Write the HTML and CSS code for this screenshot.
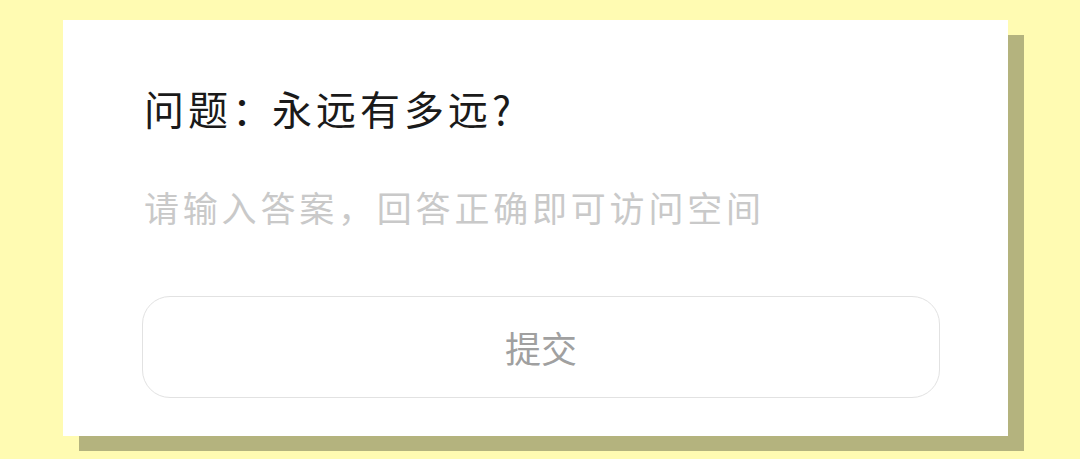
FILE: index.html
```html
<!DOCTYPE html>
<html lang="zh-CN">
<head>
    <meta charset="UTF-8">
    <meta name="viewport" content="width=device-width, initial-scale=1.0">
    <title>访问验证</title>
    <link rel="stylesheet" href="styles.css">
</head>
<body>

<div class="card">
    <div class="question">问题<span class="colon">：</span>永远有多远?</div>

    <input type="text" class="answer" placeholder="请输入答案，回答正确即可访问空间">

    <a href="#" class="submit">提交</a>
</div>

</body>
</html>
```

FILE: styles.css
```css
html {
    background-color: #fffbb2;
}
body {
    margin: 0;
    padding: 20px 0 23px;
    font-family: "Noto Sans CJK SC", "Noto Sans", sans-serif;
}
.card {
    box-sizing: border-box;
    width: 945px;
    height: 416px;
    margin-left: 63px;
    padding: 66px 68px 0 81px;
    background-color: #ffffff;
    box-shadow: 16px 15px 0 #b4b37e;
    display: flex;
    flex-direction: column;
}
.question {
    font-size: 40px;
    line-height: 44px;
    letter-spacing: 4px;
    color: #1a1a1a;
}
/* full-width colon sits a little tighter */
.question .colon {
    letter-spacing: 0;
}
.answer {
    margin-top: 55px;
    padding: 0;
    border: none;
    outline: none;
    background: transparent;
    font-family: inherit;
    font-size: 35px;
    line-height: 44px;
    height: 44px;
    letter-spacing: 3.8px;
    color: #333333;
}
.answer::placeholder {
    color: #c9c9c9;
}
.submit {
    margin: 67px 0 0 -2px;
    height: 100px;
    border: 1px solid #e2e2e2;
    border-radius: 28px;
    display: flex;
    align-items: center;
    justify-content: center;
    font-size: 36px;
    color: #a0a0a0;
    text-decoration: none;
}
```
